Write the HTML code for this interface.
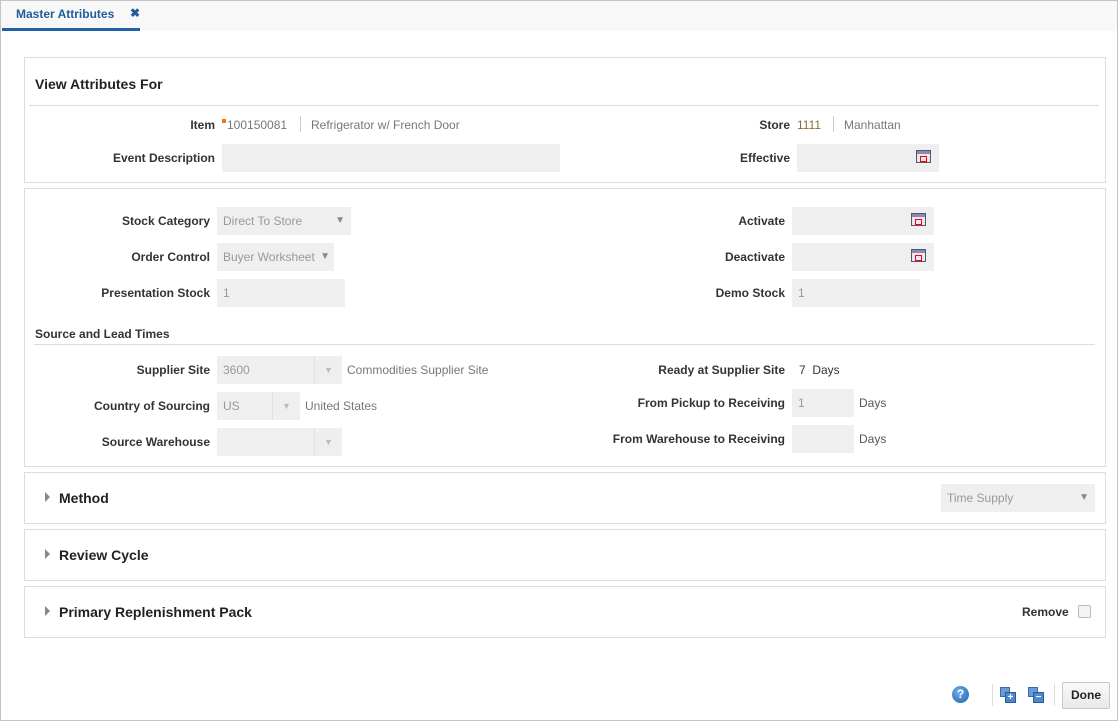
<!DOCTYPE html>
<html><head><style>
*{box-sizing:border-box;margin:0;padding:0}
body{width:1118px;height:721px;background:#fff;font-family:"Liberation Sans",Arial,sans-serif;font-size:12px;position:relative;overflow:hidden}
.a{position:absolute}
.frame{left:0;top:0;width:1118px;height:721px;border:1px solid #c4c4c4}
.tabbar{left:1px;top:1px;width:1116px;height:30px;background:#f8f8f8}
.panel{position:absolute;left:24px;width:1082px;border:1px solid #d6dfe6;background:#fff}
.lbl{position:absolute;font-weight:bold;color:#333;text-align:right;white-space:nowrap}
.val{position:absolute;color:#777;white-space:nowrap}
.inp{position:absolute;background:#efefef;height:28px;color:#999;padding:7px 6px;white-space:nowrap}
.dd{position:absolute;right:0;top:0;width:28px;height:28px;border-left:1px solid #e0e0e0;color:#bbb;font-size:9px;text-align:center;line-height:28px}
.arr{color:#888;font-size:10px}
.cal{position:absolute;width:15px;height:13px;border:1px solid #556;background:linear-gradient(#8a8ab0 0 3px,#e8e8f4 3px);}
.cal:after{content:"";position:absolute;left:3px;top:5px;width:5px;height:4px;border:1px solid red}
.h{position:absolute;font-weight:bold;color:#222;font-size:14px}
.tri{position:absolute;width:0;height:0;border-left:5px solid #888;border-top:5px solid transparent;border-bottom:5px solid transparent}
</style></head><body>
<div class="a frame"></div>
<div class="a tabbar"></div>
<div class="a" style="left:16px;top:7px;color:#1f5c99;font-weight:bold;font-size:12px">Master Attributes</div>
<div class="a" style="left:130px;top:6px;color:#1f5c99;font-weight:bold;font-size:12px">✖</div>
<div class="a" style="left:2px;top:28px;width:138px;height:3px;background:#1f62a8"></div>

<div class="panel" style="top:57px;height:126px">
 <div class="h" style="left:10px;top:18px">View Attributes For</div>
 <div class="a" style="left:4px;top:47px;width:1070px;height:1px;background:#d6dfe6"></div>
</div>
<div class="lbl" style="right:903px;top:118px">Item</div>
<div class="a" style="left:222px;top:119px;width:4px;height:4px;background:#f07a00"></div>
<div class="val" style="left:227px;top:118px">100150081</div>
<div class="a" style="left:300px;top:116px;width:1px;height:16px;background:#ccc"></div>
<div class="val" style="left:311px;top:118px">Refrigerator w/ French Door</div>
<div class="lbl" style="right:903px;top:151px">Event Description</div>
<div class="inp" style="left:222px;top:144px;width:338px"></div>
<div class="lbl" style="right:328px;top:118px">Store</div>
<div class="val" style="left:797px;top:118px;color:#8a6d3b">1111</div>
<div class="a" style="left:833px;top:116px;width:1px;height:16px;background:#ccc"></div>
<div class="val" style="left:844px;top:118px">Manhattan</div>
<div class="lbl" style="right:328px;top:151px">Effective</div>
<div class="inp" style="left:797px;top:144px;width:142px"><div class="cal" style="left:119px;top:6px"></div></div>

<div class="panel" style="top:188px;height:279px"></div>
<div class="lbl" style="right:908px;top:214px">Stock Category</div>
<div class="inp" style="left:217px;top:207px;width:134px">Direct To Store<span class="arr" style="position:absolute;right:6px;top:8px">▼</span></div>
<div class="lbl" style="right:908px;top:250px">Order Control</div>
<div class="inp" style="left:217px;top:243px;width:117px">Buyer Worksheet<span class="arr" style="position:absolute;right:4px;top:8px;background:#efefef">▼</span></div>
<div class="lbl" style="right:908px;top:286px">Presentation Stock</div>
<div class="inp" style="left:217px;top:279px;width:128px">1</div>
<div class="lbl" style="right:333px;top:214px">Activate</div>
<div class="inp" style="left:792px;top:207px;width:142px"><div class="cal" style="left:119px;top:6px"></div></div>
<div class="lbl" style="right:333px;top:250px">Deactivate</div>
<div class="inp" style="left:792px;top:243px;width:142px"><div class="cal" style="left:119px;top:6px"></div></div>
<div class="lbl" style="right:333px;top:286px">Demo Stock</div>
<div class="inp" style="left:792px;top:279px;width:128px">1</div>
<div class="lbl" style="left:35px;top:327px">Source and Lead Times</div>
<div class="a" style="left:34px;top:344px;width:1061px;height:1px;background:#d6dfe6"></div>
<div class="lbl" style="right:908px;top:363px">Supplier Site</div>
<div class="inp" style="left:217px;top:356px;width:125px">3600<div class="dd">▼</div></div>
<div class="val" style="left:347px;top:363px">Commodities Supplier Site</div>
<div class="lbl" style="right:908px;top:399px">Country of Sourcing</div>
<div class="inp" style="left:217px;top:392px;width:83px">US<div class="dd">▼</div></div>
<div class="val" style="left:305px;top:399px">United States</div>
<div class="lbl" style="right:908px;top:435px">Source Warehouse</div>
<div class="inp" style="left:217px;top:428px;width:125px"><div class="dd">▼</div></div>
<div class="lbl" style="right:333px;top:363px">Ready at Supplier Site</div>
<div class="val" style="left:799px;top:363px;color:#333">7&nbsp; Days</div>
<div class="lbl" style="right:333px;top:396px">From Pickup to Receiving</div>
<div class="inp" style="left:792px;top:389px;width:62px">1</div>
<div class="val" style="left:859px;top:396px;color:#555">Days</div>
<div class="lbl" style="right:333px;top:432px">From Warehouse to Receiving</div>
<div class="inp" style="left:792px;top:425px;width:62px"></div>
<div class="val" style="left:859px;top:432px;color:#555">Days</div>

<div class="panel" style="top:472px;height:52px"></div>
<div class="tri" style="left:45px;top:492px"></div>
<div class="h" style="left:59px;top:490px">Method</div>
<div class="inp" style="left:941px;top:484px;width:154px">Time Supply<span class="arr" style="position:absolute;right:6px;top:8px">▼</span></div>
<div class="panel" style="top:529px;height:52px"></div>
<div class="tri" style="left:45px;top:549px"></div>
<div class="h" style="left:59px;top:547px">Review Cycle</div>
<div class="panel" style="top:586px;height:52px"></div>
<div class="tri" style="left:45px;top:606px"></div>
<div class="h" style="left:59px;top:604px">Primary Replenishment Pack</div>
<div class="lbl" style="left:1022px;top:605px">Remove</div>
<div class="a" style="left:1078px;top:605px;width:13px;height:13px;border:1px solid #bbb;border-radius:2px;background:#f4f4f4"></div>

<div class="a" style="left:952px;top:686px;width:17px;height:17px;border-radius:50%;background:radial-gradient(circle at 40% 35%,#6fb0ea,#1c5fb0);color:#fff;font-weight:bold;font-size:12px;text-align:center;line-height:17px">?</div>
<div class="a" style="left:992px;top:684px;width:1px;height:22px;background:#ddd"></div>
<div class="a" style="left:1000px;top:687px;width:10px;height:10px;background:#6b9bd6;border:1px solid #3a6aa8"></div>
<div class="a" style="left:1005px;top:692px;width:11px;height:11px;background:#4f86cc;border:1px solid #2a5a98;color:#fff;font-size:10px;line-height:9px;text-align:center;font-weight:bold">+</div>
<div class="a" style="left:1028px;top:687px;width:10px;height:10px;background:#6b9bd6;border:1px solid #3a6aa8"></div>
<div class="a" style="left:1033px;top:692px;width:11px;height:11px;background:#4f86cc;border:1px solid #2a5a98;color:#fff;font-size:10px;line-height:9px;text-align:center;font-weight:bold">−</div>
<div class="a" style="left:1054px;top:684px;width:1px;height:22px;background:#ddd"></div>
<div class="a" style="left:1062px;top:682px;width:48px;height:27px;border:1px solid #c8c8c8;border-radius:2px;background:linear-gradient(#fafafa,#e8e8e8);font-weight:bold;color:#222;text-align:center;line-height:25px">Done</div>
</body></html>
